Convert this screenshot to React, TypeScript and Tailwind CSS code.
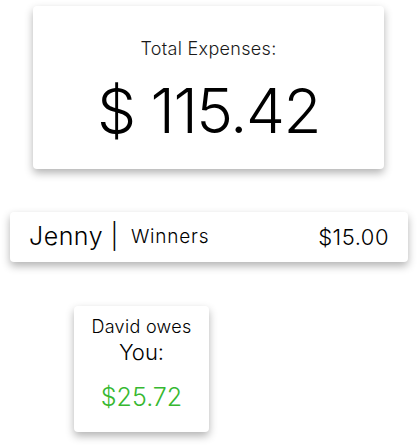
export default function App() {
  return (
    <div className="w-[418px] h-[446px] bg-white relative" style={{ fontFamily: "Inter, 'Open Sans', sans-serif" }}>
      <div className="pt-[6px] pl-[33px]">
        <div className="w-[351px] h-[163px] bg-white rounded-[4px] shadow-[0_4px_8px_rgba(0,0,0,0.3)] flex flex-col items-center">
          <div className="mt-[32px] text-[18px] leading-[22px] text-[#1a1a1a] font-light tracking-[0.3px]">Total Expenses:</div>
          <div className="mt-[16px] text-[62px] leading-[70px] font-light text-black tracking-[-1.5px]">$ 115.42</div>
        </div>
      </div>
      <div className="pt-[43px] pl-[10px]">
        <div className="w-[398px] h-[50px] bg-white rounded-[4px] shadow-[0_4px_8px_rgba(0,0,0,0.3)] flex items-center px-[19px]">
          <span className="text-[25px] font-light text-black tracking-[0.5px]">Jenny |</span>
          <span className="ml-[12px] text-[19px] font-light text-black tracking-[0.8px]">Winners</span>
          <span className="ml-auto text-[22px] font-light text-black tracking-[0.5px]">$15.00</span>
        </div>
      </div>
      <div className="pt-[44px] pl-[74px]">
        <div className="w-[135px] h-[126px] bg-white rounded-[4px] shadow-[0_4px_8px_rgba(0,0,0,0.3)] flex flex-col items-center">
          <div className="mt-[10px] text-[18px] leading-[22px] font-light text-black tracking-[0.3px]">David owes</div>
          <div className="text-[22px] leading-[28px] font-light text-black">You:</div>
          <div className="mt-[16px] text-[25px] leading-[30px] font-light text-[#36b830]">$25.72</div>
        </div>
      </div>
    </div>
  );
}
